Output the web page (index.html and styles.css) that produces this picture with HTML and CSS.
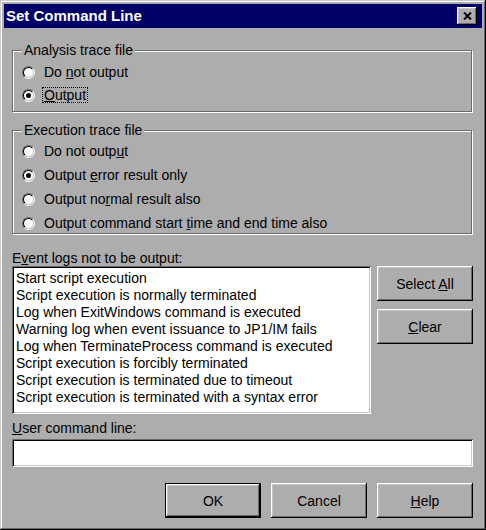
FILE: index.html
```html
<!DOCTYPE html>
<html lang="en">
<head>
<meta charset="utf-8">
<title>Set Command Line</title>
<link rel="stylesheet" href="styles.css">
</head>
<body>
<div class="window">
  <div class="titlebar">
    <span class="title">Set Command Line</span>
    <button class="close" type="button" aria-label="Close">
      <svg width="9" height="8" viewBox="0 0 9 8"><path d="M1 0.5 L8 7.5 M8 0.5 L1 7.5" stroke="#000" stroke-width="2" fill="none"/></svg>
    </button>
  </div>
  <div class="body">
    <div class="group g1">
      <div class="group-title">Analysis trace file</div>
      <div class="options">
        <div class="radio"><span class="rb"><span class="rb-in"></span></span><span>Do <u>n</u>ot output</span></div>
        <div class="radio"><span class="rb"><span class="rb-in"><span class="dot"></span></span></span><span class="focus"><u>O</u>utput</span></div>
      </div>
    </div>
    <div class="group g2">
      <div class="group-title">Execution trace file</div>
      <div class="options">
        <div class="radio"><span class="rb"><span class="rb-in"></span></span><span>Do not outp<u>u</u>t</span></div>
        <div class="radio"><span class="rb"><span class="rb-in"><span class="dot"></span></span></span><span>Output <u>e</u>rror result only</span></div>
        <div class="radio"><span class="rb"><span class="rb-in"></span></span><span>Output no<u>r</u>mal result also</span></div>
        <div class="radio"><span class="rb"><span class="rb-in"></span></span><span>Output command start <u>t</u>ime and end time also</span></div>
      </div>
    </div>
    <div class="label event-label">E<u>v</u>ent logs not to be output:</div>
    <div class="list-row">
      <div class="list">
        <div class="item">Start script execution</div>
        <div class="item">Script execution is normally terminated</div>
        <div class="item">Log when ExitWindows command is executed</div>
        <div class="item">Warning log when event issuance to JP1/IM fails</div>
        <div class="item">Log when TerminateProcess command is executed</div>
        <div class="item">Script execution is forcibly terminated</div>
        <div class="item">Script execution is terminated due to timeout</div>
        <div class="item">Script execution is terminated with a syntax error</div>
      </div>
      <div class="side-buttons">
        <button class="btn" type="button">Select <u>A</u>ll</button>
        <button class="btn" type="button"><u>C</u>lear</button>
      </div>
    </div>
    <div class="label user-label"><u>U</u>ser command line:</div>
    <div class="input"></div>
    <div class="footer">
      <button class="btn default" type="button">OK</button>
      <button class="btn" type="button">Cancel</button>
      <button class="btn" type="button"><u>H</u>elp</button>
    </div>
  </div>
</div>
</body>
</html>
```
FILE: styles.css
```css
* { box-sizing: border-box; }

body {
  margin: 0;
  background: #adadad;
  font-family: "Liberation Sans", Arial, sans-serif;
  font-size: 14px;
  color: #000;
}

.window {
  width: 486px;
  height: 530px;
  padding: 4px;
  background: #adadad;
  box-shadow: inset -1px -1px 0 #000, inset 1px 1px 0 #c8c8c8,
              inset -2px -2px 0 #6b6b6b, inset 2px 2px 0 #fff;
  display: flex;
  flex-direction: column;
}

.titlebar {
  height: 24px;
  background: #000068;
  display: flex;
  align-items: center;
  justify-content: space-between;
  padding: 0 5px 0 2px;
}

.title {
  color: #fff;
  font-weight: bold;
  font-size: 15px;
  line-height: 18px;
}

.close {
  width: 20px;
  height: 18px;
  padding: 0;
  border: none;
  background: #adadad;
  box-shadow: inset -1px -1px 0 #000, inset 1px 1px 0 #fff,
              inset -2px -2px 0 #6b6b6b, inset 2px 2px 0 #c4c4c4;
  display: flex;
  align-items: center;
  justify-content: center;
  padding-bottom: 1px;
}

.body {
  padding: 22px 9px 0 8px;
  display: flex;
  flex-direction: column;
}

.group {
  border: 1px solid #6b6b6b;
  box-shadow: inset 1px 1px 0 #fff, 1px 1px 0 #fff;
  padding: 0 9px;
  margin-right: 1px;
}

.group-title {
  width: fit-content;
  margin-top: -9px;
  line-height: 16px;
  padding: 0 2px;
  background: #adadad;
}

.options {
  display: flex;
  flex-direction: column;
}

.g1 { padding-bottom: 8px; }
.g1 .options { margin-top: 6px; gap: 7px; }

.g2 { margin-top: 18px; padding-bottom: 2px; }
.g2 .options { margin-top: 5px; gap: 8px; }

.radio {
  display: flex;
  align-items: center;
  gap: 9px;
  height: 16px;
  line-height: 16px;
  white-space: nowrap;
}

.rb {
  width: 13px;
  height: 13px;
  border-radius: 50%;
  border: 1px solid;
  border-color: #6b6b6b #fff #fff #6b6b6b;
  display: flex;
  flex: none;
}

.rb-in {
  flex: 1;
  border-radius: 50%;
  border: 1px solid;
  border-color: #000 #c8c8c8 #c8c8c8 #000;
  background: #fff;
  display: flex;
  align-items: center;
  justify-content: center;
}

.dot {
  width: 5px;
  height: 5px;
  border-radius: 50%;
  background: #000;
}

.focus {
  border: 1px dotted #000;
  line-height: 14px;
  padding: 0 1px;
  margin-left: -2px;
}

.label {
  line-height: 16px;
  white-space: nowrap;
}

.event-label { margin-top: 16px; }

.list-row {
  display: flex;
  gap: 6px;
  align-items: flex-start;
}

.list {
  width: 359px;
  height: 148px;
  background: #fff;
  padding: 4px 4px;
  box-shadow: inset 1px 1px 0 #6b6b6b, inset -1px -1px 0 #fff,
              inset 2px 2px 0 #000, inset -2px -2px 0 #c8c8c8;
  overflow: hidden;
}

.item {
  line-height: 17px;
  height: 17px;
  white-space: nowrap;
}

.side-buttons {
  display: flex;
  flex-direction: column;
  gap: 8px;
}

.btn {
  width: 96px;
  height: 35px;
  padding: 0;
  border: none;
  background: #adadad;
  font-family: inherit;
  font-size: 14px;
  color: #000;
  box-shadow: inset -1px -1px 0 #000, inset 1px 1px 0 #fff,
              inset -2px -2px 0 #6b6b6b, inset 2px 2px 0 #c4c4c4;
}

.btn.default {
  border: 1px solid #000;
}

.user-label { margin-top: 6px; }

.input {
  margin-top: 3px;
  width: 461px;
  height: 28px;
  background: #fff;
  box-shadow: inset 1px 1px 0 #6b6b6b, inset -1px -1px 0 #fff,
              inset 2px 2px 0 #000, inset -2px -2px 0 #c8c8c8;
}

.footer {
  margin-top: 16px;
  display: flex;
  justify-content: flex-end;
  gap: 10px;
}
```
